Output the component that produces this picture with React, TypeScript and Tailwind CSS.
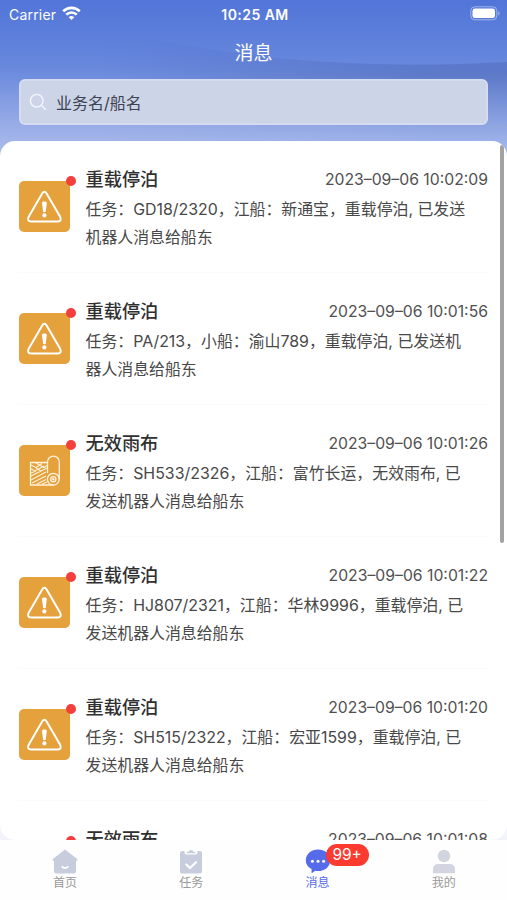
import React from 'react';

type MessageKind = 'anchor' | 'cover';

interface Message {
  kind: MessageKind;
  title: string;
  time: string;
  lines: string[];
}

const messages: Message[] = [
  {
    kind: 'anchor',
    title: '重载停泊',
    time: '2023–09–06 10:02:09',
    lines: ['任务：GD18/2320，江船：新通宝，重载停泊, 已发送', '机器人消息给船东'],
  },
  {
    kind: 'anchor',
    title: '重载停泊',
    time: '2023–09–06 10:01:56',
    lines: ['任务：PA/213，小船：渝山789，重载停泊, 已发送机', '器人消息给船东'],
  },
  {
    kind: 'cover',
    title: '无效雨布',
    time: '2023–09–06 10:01:26',
    lines: ['任务：SH533/2326，江船：富竹长运，无效雨布, 已', '发送机器人消息给船东'],
  },
  {
    kind: 'anchor',
    title: '重载停泊',
    time: '2023–09–06 10:01:22',
    lines: ['任务：HJ807/2321，江船：华林9996，重载停泊, 已', '发送机器人消息给船东'],
  },
  {
    kind: 'anchor',
    title: '重载停泊',
    time: '2023–09–06 10:01:20',
    lines: ['任务：SH515/2322，江船：宏亚1599，重载停泊, 已', '发送机器人消息给船东'],
  },
  {
    kind: 'cover',
    title: '无效雨布',
    time: '2023–09–06 10:01:08',
    lines: [],
  },
];

const WarningIcon = () => (
  <svg width="51" height="51" viewBox="0 0 51 51" fill="none">
    <path
      d="M23.2 12.4 9.8 35.600c-1.600 2.900-.7 4.900 2.200 4.900h26.800c2.900 0 3.800-2 2.200-4.900L27.600 12.400c-1.200-2.100-3.200-2.100-4.400 0Z"
      stroke="#fff"
      strokeWidth="2"
    />
    <path d="M23 21.800c0-1.800 4.800-1.800 4.800 0l-1 8.400c-.2 1.300-2.600 1.300-2.800 0Z" fill="#fff" />
    <circle cx="25.4" cy="34.4" r="2.1" fill="#fff" />
  </svg>
);

const RollIcon = () => (
  <svg width="51" height="51" viewBox="0 0 51 51" fill="none" stroke="#fff3dc" strokeWidth="1.3">
    <path d="M28 17.500H11.500V40h23" />
    <path d="M28.500 28V17a5.900 5.900 0 0 1 11.800 0v17" />
    <circle cx="34.300" cy="34.200" r="5.900" />
    <circle cx="34.300" cy="34.200" r="2.600" />
    <circle cx="34.300" cy="34.200" r="0.600" />
    <path
      d="m12 20 5 2.500 6-4M17 18l8 4.500 3-2M12 24l4 2 9-5M17 23l5 3 6-3M12 31l12-6M12 35l15-8M13 38l14-7M18 39l9-4.500M12 28l5-2M23 39l5-2"
      strokeWidth="1.1"
    />
  </svg>
);

const HomeIcon = () => (
  <svg width="26" height="26" viewBox="0 0 26 26">
    <path d="M13 .5 25.200 10c.7.6.3 1.800-.6 1.800H24V22a2.500 2.500 0 0 1-2.500 2.500h-17A2.500 2.500 0 0 1 2 22V11.800h-.6c-.9 0-1.300-1.200-.6-1.800Z" fill="#c8cddd" />
    <path d="M10.300 17.800c1.600 1.600 3.800 1.600 5.400 0" fill="none" stroke="#fff" strokeWidth="1.800" strokeLinecap="round" />
  </svg>
);

const TaskIcon = () => (
  <svg width="26" height="26" viewBox="0 0 26 26">
    <path d="M4 2h2.500v1.500a2 2 0 0 0 2 2h9a2 2 0 0 0 2-2V2H22a2 2 0 0 1 2 2v18.500a2 2 0 0 1-2 2H4a2 2 0 0 1-2-2V4a2 2 0 0 1 2-2Z" fill="#c8cddd" />
    <path d="M8.500 4.300c0-1 .8-1.500 2-1.500a2.600 2.600 0 0 1 5 0c1.200 0 2 .5 2 1.500Z" fill="#c8cddd" />
    <path d="m8.300 15.500 3.700 3.500 6-5.800" fill="none" stroke="#fff" strokeWidth="2.200" strokeLinecap="round" />
  </svg>
);

const ChatIcon = () => (
  <svg width="26" height="26" viewBox="0 0 26 26">
    <path d="M13 .5c6.800 0 12.200 4.700 12.200 10.900S19.800 22 13 22c-1 0-2 0-3-.3L6.600 24.400V20C3 18.300.8 15.300.8 11.400.8 5.200 6.200.5 13 .5Z" fill="#566bea" />
    <circle cx="7.400" cy="12.200" r="1.500" fill="#fff" />
    <circle cx="13" cy="12.200" r="1.500" fill="#fff" />
    <circle cx="18.600" cy="12.200" r="1.500" fill="#fff" />
  </svg>
);

const UserIcon = () => (
  <svg width="26" height="26" viewBox="0 0 26 26" fill="#d2d5df">
    <circle cx="13" cy="7" r="6.200" />
    <path d="M2 24.300V20a5 5 0 0 1 5-5h12a5 5 0 0 1 5 5v4.300Z" />
  </svg>
);

const StatusBar = () => (
  <div className="grid h-7 grid-cols-3 items-center pl-[9px] pr-[6px] text-[14px] text-white">
    <div className="flex items-center gap-1.5">
      <span className="tracking-[0.2px]">Carrier</span>
      <svg className="-mt-[2px]" width="19" height="15" viewBox="0 0 19 15" fill="none" stroke="#fff" strokeWidth="2.6">
        <path d="M1.200 5.300c4.700-4.600 11.900-4.600 16.600 0" />
        <path d="M4.300 8.600c2.900-2.900 7.500-2.900 10.400 0" />
        <path d="M9.500 14 6.700 11.200c1.600-1.500 4-1.500 5.600 0Z" fill="#fff" stroke="none" />
      </svg>
    </div>
    <span className="whitespace-nowrap text-center font-semibold tracking-[0.45px]">10:25 AM</span>
    <div className="flex justify-end">
      <svg className="-mt-[2px]" width="31" height="15" viewBox="0 0 31 15" fill="none">
        <rect x="0.800" y="0.800" width="26" height="13" rx="4" stroke="#fff" strokeOpacity="0.45" />
        <rect x="2.500" y="2.500" width="22.500" height="9.600" rx="2.400" fill="#fff" />
        <path d="M28.300 5v4.600c1.800-.8 1.800-3.800 0-4.600Z" fill="#fff" fillOpacity="0.45" />
      </svg>
    </div>
  </div>
);

const MessageRow = ({ message }: { message: Message }) => (
  <div className="mx-[19px] flex h-[132px] shrink-0 gap-[15.5px] border-b border-[#fbfbfb] pt-[23px]">
    <div className="relative mt-[17px] h-[51px] w-[51px] shrink-0 rounded-[5px] bg-[#e4a13c]">
      {message.kind === 'anchor' ? <WarningIcon /> : <RollIcon />}
      <span className="absolute -right-[6px] -top-[5px] h-[10px] w-[10px] rounded-full bg-[#f43f3d]" />
    </div>
    <div className="min-w-0 flex-1 whitespace-nowrap">
      <div className="flex h-[32px] items-center justify-between pb-[1px]">
        <span className="text-[18.2px] font-medium text-[#303030]">{message.title}</span>
        <span className="text-[15.75px] text-[#505050]">{message.time}</span>
      </div>
      {message.lines.map((line) => (
        <p key={line} className="text-[15.9px] leading-[28px] text-[#484848]">
          {line}
        </p>
      ))}
    </div>
  </div>
);

const tabs = [
  { label: '首页', icon: <HomeIcon /> },
  { label: '任务', icon: <TaskIcon /> },
  { label: '消息', icon: <ChatIcon />, active: true, badge: '99+' },
  { label: '我的', icon: <UserIcon /> },
];

const TabBar = () => (
  <nav className="grid h-[60px] grid-cols-4 bg-[#fefefe] pl-[2px]">
    {tabs.map((tab) => (
      <div key={tab.label} className="flex flex-col items-center pt-[9px]">
        <div className="relative h-[26px] w-[26px]">
          {tab.icon}
          {tab.badge && (
            <span className="absolute -top-[5px] left-[21px] flex h-[22px] w-[43px] items-center justify-center rounded-full bg-[#fb3b30] text-[15.5px] text-white">
              {tab.badge}
            </span>
          )}
        </div>
        <span className={`text-[12px] leading-[15px] ${tab.active ? 'text-[#566bea]' : 'text-[#999]'}`}>
          {tab.label}
        </span>
      </div>
    ))}
  </nav>
);

const App = () => {
  return (
    <div
      lang="zh-CN"
      className="relative isolate flex h-[900px] w-[507px] flex-col overflow-hidden bg-[#f2f3fd] font-['Inter','Noto_Sans_CJK_SC',sans-serif]"
    >
      {/* Header backdrop with the darker wave */}
      <svg className="absolute left-0 top-0 -z-10" width="507" height="165" viewBox="0 0 507 165">
        <defs>
          <linearGradient id="sky" x1="0" y1="0" x2="0" y2="1">
            <stop offset="0" stopColor="#5175d8" />
            <stop offset="0.4" stopColor="#6888dd" />
            <stop offset="0.8" stopColor="#9db0e8" />
            <stop offset="1" stopColor="#b3c1ee" />
          </linearGradient>
          <linearGradient id="wave" x1="0" y1="0" x2="0" y2="1">
            <stop offset="0" stopColor="#5578d6" />
            <stop offset="0.32" stopColor="#5d79c8" />
            <stop offset="0.8" stopColor="#9aafe8" stopOpacity="0.9" />
            <stop offset="1" stopColor="#a5b7eb" stopOpacity="0" />
          </linearGradient>
          <linearGradient id="waveFade" x1="0" y1="0" x2="1" y2="0">
            <stop offset="0.2" stopColor="#fff" stopOpacity="0" />
            <stop offset="0.85" stopColor="#fff" />
          </linearGradient>
          <mask id="fade">
            <rect width="507" height="165" fill="url(#waveFade)" />
          </mask>
        </defs>
        <rect width="507" height="165" fill="url(#sky)" />
        <path
          d="M100 32C190 44 240 58 330 62c70 4 120 3 177 0v103H100Z"
          fill="url(#wave)"
          mask="url(#fade)"
        />
      </svg>

      <StatusBar />

      <h1 className="flex h-[51px] items-center justify-center pt-[2px] text-[19px] text-white">消息</h1>

      <div className="mx-[19px] flex h-[46px] shrink-0 items-center gap-[9px] rounded-[6px] border-2 border-[#d5dcf1] bg-[#ccd4e8] pl-[8px]">
        <svg width="18" height="18" viewBox="0 0 18 18" fill="none" stroke="#f4f6fc" strokeWidth="1.4">
          <circle cx="7.700" cy="7.700" r="6.300" />
          <path d="m12.300 12.300 4.500 4.500" />
        </svg>
        <span className="pt-[1px] text-[16px] text-[#3d4250]">业务名/船名</span>
      </div>

      <main className="relative mt-[16px] h-[699px] shrink-0 overflow-hidden rounded-[15px] bg-white">
        {messages.map((message) => (
          <MessageRow key={message.time} message={message} />
        ))}
        <div className="absolute right-[3px] top-[4px] h-[398px] w-[4px] rounded-full bg-[#a2a2a2]" />
      </main>

      <TabBar />
    </div>
  );
};

export default App;
